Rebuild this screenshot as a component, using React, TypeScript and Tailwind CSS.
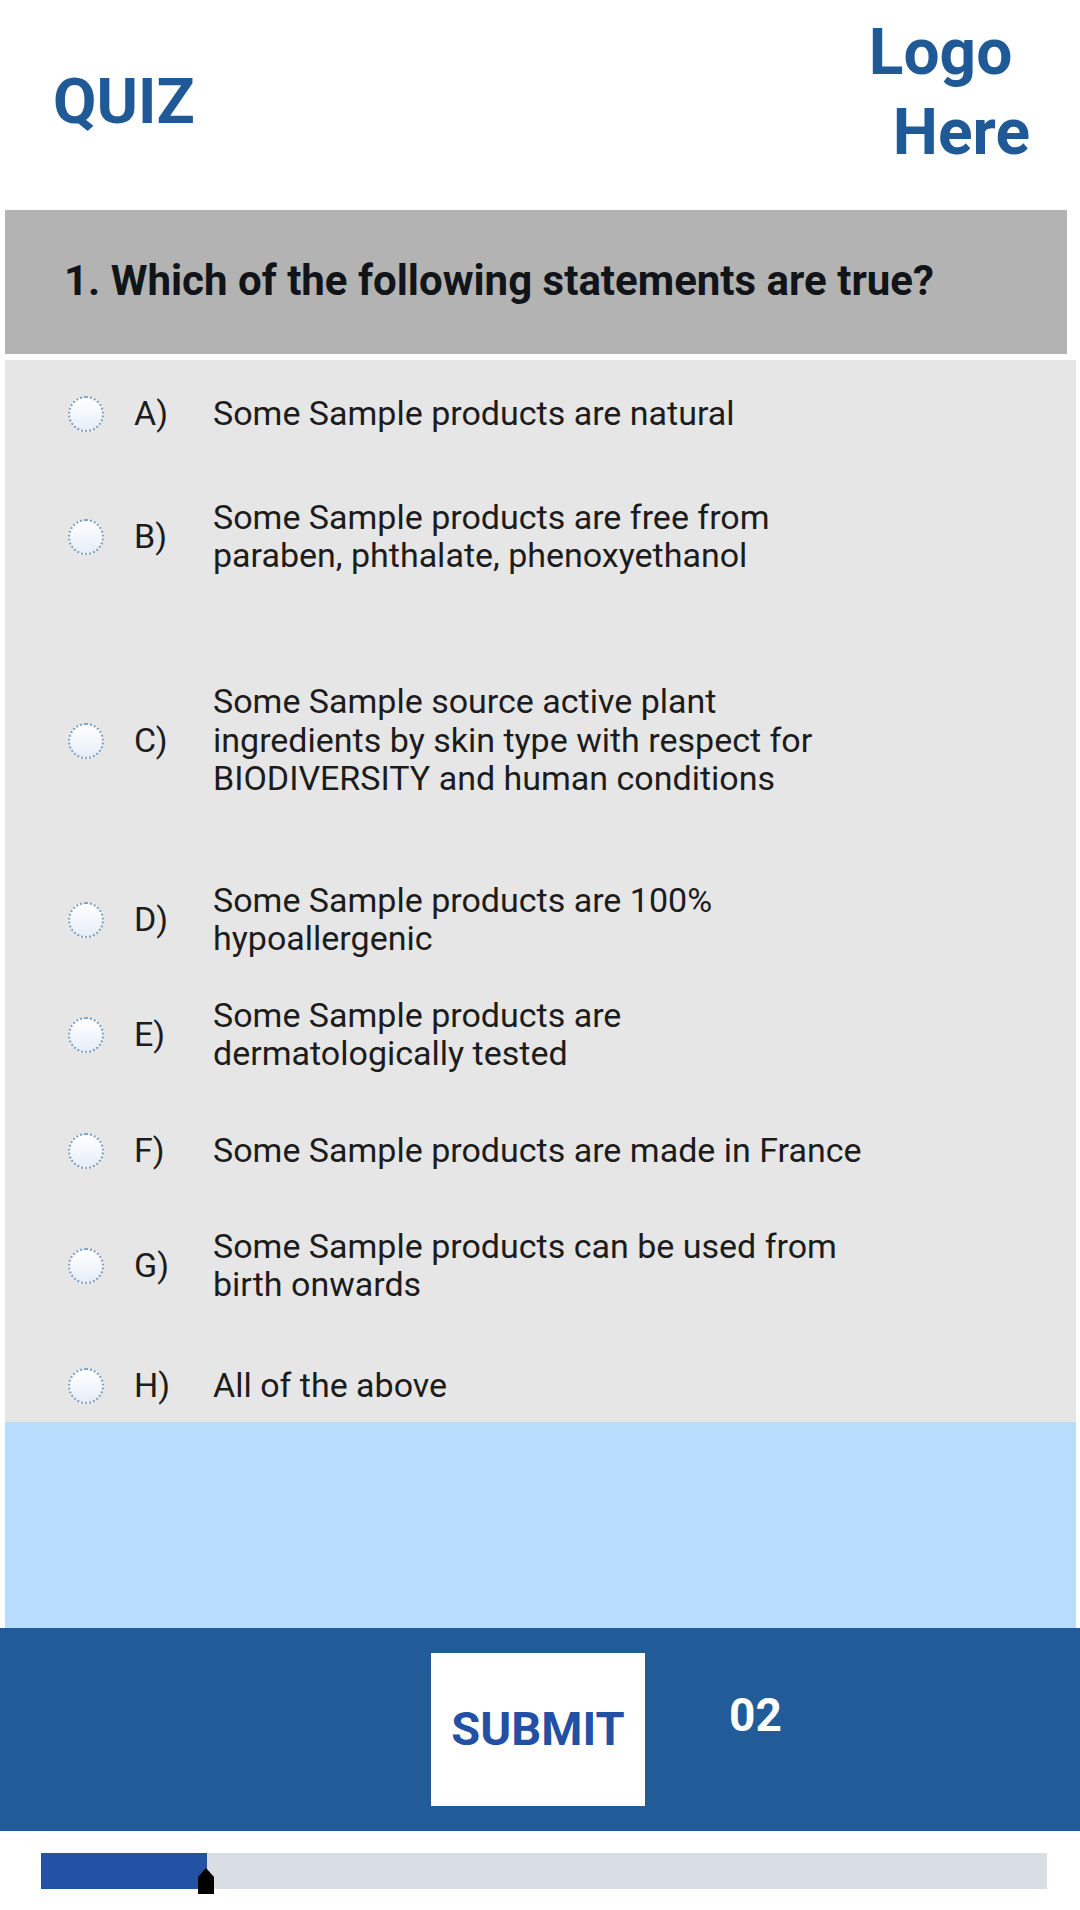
import React from 'react';

interface Option {
  key: string;
  lines: string[];
  rowClass: string;
}

const options: Option[] = [
  { key: 'A)', lines: ['Some Sample products are natural'], rowClass: 'h-[108px]' },
  { key: 'B)', lines: ['Some Sample products are free from', 'paraben, phthalate, phenoxyethanol'], rowClass: 'h-[138px]' },
  {
    key: 'C)',
    lines: [
      'Some Sample source active plant',
      'ingredients by skin type with respect for',
      'BIODIVERSITY and human conditions',
    ],
    rowClass: 'h-[270px]',
  },
  { key: 'D)', lines: ['Some Sample products are 100%', 'hypoallergenic'], rowClass: 'h-[88px]' },
  { key: 'E)', lines: ['Some Sample products are', 'dermatologically tested'], rowClass: 'h-[142px]' },
  { key: 'F)', lines: ['Some Sample products are made in France'], rowClass: 'h-[90px]' },
  { key: 'G)', lines: ['Some Sample products can be used from', 'birth onwards'], rowClass: 'h-[140px]' },
  { key: 'H)', lines: ['All of the above'], rowClass: 'h-[86px] pt-[14px]' },
];

function Radio() {
  return (
    <div className="h-[36px] w-[36px] shrink-0 rounded-full border-2 border-dotted border-[#7f9fc0] bg-gradient-to-b from-[#ffffff] to-[#e6eef8]" />
  );
}

export default function App() {
  return (
    <div className="w-[1080px] h-[1910px] bg-white font-['Roboto',sans-serif] overflow-hidden">
      {/* Header */}
      <div className="flex h-[210px] justify-between">
        <h1 className="pl-[53px] pt-[70px] text-[63px] font-bold leading-[64px] text-[#1f5a96]">QUIZ</h1>
        <div className="pr-[50px] pt-[13px] text-[64px] font-bold leading-[80px] text-[#1f5a96]">
          <div>Logo</div>
          <div className="pl-[24px]">Here</div>
        </div>
      </div>

      {/* Question */}
      <div className="ml-[5px] flex h-[144px] w-[1062px] items-center bg-[#b3b3b3] pb-[4px] pl-[59px]">
        <h2 className="text-[42px] font-bold text-[#111418]">1. Which of the following statements are true?</h2>
      </div>

      {/* Options */}
      <div className="ml-[5px] mt-[6px] w-[1071px] bg-[#e6e6e6]">
        {options.map((opt) => (
          <label key={opt.key} className={`flex items-center ${opt.rowClass}`}>
            <div className="shrink-0 pl-[63px]">
              <Radio />
            </div>
            <span className="block w-[109px] shrink-0 pb-[2px] pl-[30px] text-[34px] leading-[38px] text-[#1c1c1c]">{opt.key}</span>
            <span className="block pb-[2px] text-[34px] leading-[38.5px] text-[#1c1c1c]">
              {opt.lines.map((line, i) => (
                <React.Fragment key={i}>
                  {i > 0 && <br />}
                  {line}
                </React.Fragment>
              ))}
            </span>
          </label>
        ))}
      </div>

      {/* Feedback area */}
      <div className="ml-[5px] h-[206px] w-[1071px] bg-[#b8dcfb]" />

      {/* Footer band */}
      <div className="flex h-[203px] items-start bg-[#215b98] pl-[431px] pt-[25px]">
        <button className="flex h-[153px] w-[214px] items-center justify-center bg-white text-[47px] font-bold text-[#2350a3]">
          SUBMIT
        </button>
        <span className="ml-[84px] mt-[28px] text-[46px] font-bold text-white">02</span>
      </div>

      {/* Progress */}
      <div className="relative ml-[41px] mt-[22px] h-[36px] w-[1006px] bg-[#d9dee4]">
        <div className="h-full w-[166px] bg-[#2352a5]" />
        <svg className="absolute left-[156px] top-[15px]" width="18" height="26" viewBox="0 0 18 26">
          <path d="M9 0 L17 9 L17 26 L1 26 L1 9 Z" fill="#000" />
        </svg>
      </div>
    </div>
  );
}
